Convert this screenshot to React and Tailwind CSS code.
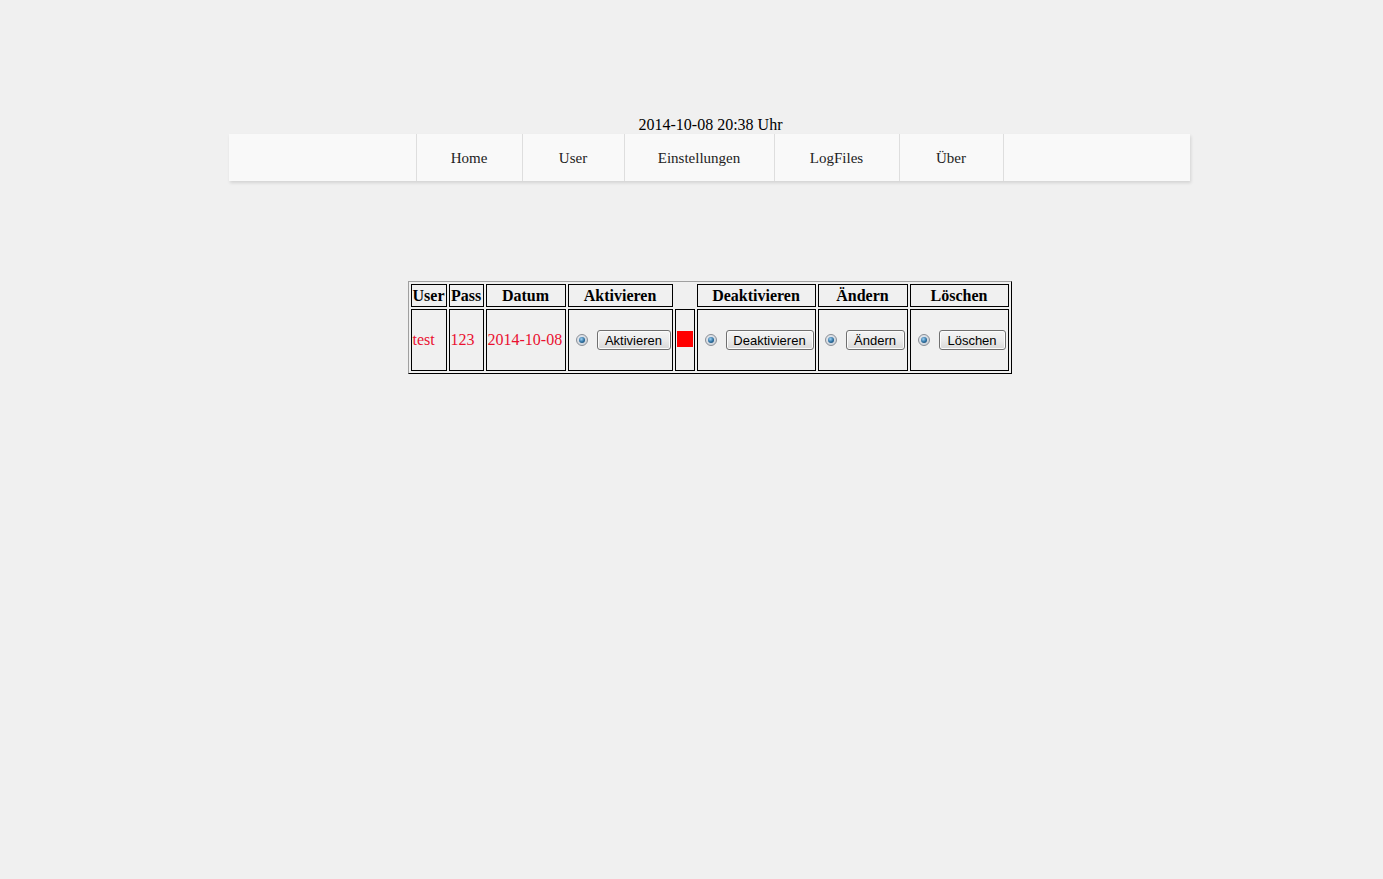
import React from 'react';

const navItems = [
  { label: 'Home', w: 'w-[106px]' },
  { label: 'User', w: 'w-[102px]' },
  { label: 'Einstellungen', w: 'w-[150px]' },
  { label: 'LogFiles', w: 'w-[125px]' },
  { label: 'Über', w: 'w-[104px]' },
];

function Radio() {
  return (
    <span className="inline-flex items-center justify-center w-[12px] h-[12px] rounded-full border border-[#8a8f96] bg-gradient-to-br from-[#e4e8ee] to-[#c9d0d8] shrink-0">
      <span className="w-[6px] h-[6px] rounded-full bg-[radial-gradient(circle_at_40%_35%,#9fd3f5_0%,#2c6fa0_55%,#173d5e_100%)]" />
    </span>
  );
}

function Btn({ children, w }) {
  return (
    <button
      type="button"
      className={`${w} h-[20px] rounded-[3px] border border-[#707070] bg-gradient-to-b from-[#f4f4f4] via-[#ebebeb] to-[#d8d8d8] text-[13px] leading-none text-black font-['Liberation_Sans',Arial,sans-serif] shadow-[inset_0_0_0_1px_#fbfbfb]`}
    >
      {children}
    </button>
  );
}

function ActionCell({ label, w, pl }) {
  return (
    <td className="border border-black p-0">
      <div className={`flex items-center ${pl} gap-[9px]`}>
        <Radio />
        <Btn w={w}>{label}</Btn>
      </div>
    </td>
  );
}

export default function App() {
  const th = 'border border-black p-0 h-[21px] leading-[21px] font-bold text-[16px] text-center';
  return (
    <div className="min-h-screen bg-[#f0f0f0] font-['Liberation_Serif','Times_New_Roman',serif] text-black">
      <div className="w-[961px] ml-[229px] pt-[116px]">
        <div className="text-center text-[16px] leading-[18px] ml-[2px]">2014-10-08 20:38 Uhr</div>

        {/* Navigation */}
        <nav className="h-[47px] bg-[#f9f9f9] shadow-[1px_2px_3px_rgba(0,0,0,0.12)] flex justify-center">
          <ul className="flex border-r border-[#dedede]">
            {navItems.map((item) => (
              <li
                key={item.label}
                className={`${item.w} border-l border-[#dedede] flex items-center justify-center pt-[2px] text-[15px] text-[#222]`}
              >
                {item.label}
              </li>
            ))}
          </ul>
        </nav>

        {/* User table */}
        <table className="mt-[100px] mx-auto table-fixed border-separate border-spacing-[2px] border border-t-[#a0a0a0] border-l-[#a0a0a0] border-r-black border-b-black w-[604px]">
          <colgroup>
            <col className="w-[36px]" />
            <col className="w-[35px]" />
            <col className="w-[80px]" />
            <col className="w-[105px]" />
            <col className="w-[20px]" />
            <col className="w-[119px]" />
            <col className="w-[90px]" />
            <col className="w-[99px]" />
          </colgroup>
          <thead>
            <tr>
              <th className={th}>User</th>
              <th className={th}>Pass</th>
              <th className={th}>Datum</th>
              <th className={th}>Aktivieren</th>
              <th className="p-0 border-0" />
              <th className={th}>Deaktivieren</th>
              <th className={th}>Ändern</th>
              <th className={th}>Löschen</th>
            </tr>
          </thead>
          <tbody>
            <tr className="h-[62px] text-[16px] text-[#ea1030]">
              <td className="border border-black p-0 pl-[1px]">test</td>
              <td className="border border-black p-0 pl-[1px]">123</td>
              <td className="border border-black p-0 pl-[1px]">2014-10-08</td>
              <ActionCell label="Aktivieren" w="w-[74px]" pl="pl-[7px]" />
              <td className="border border-black p-0">
                <div className="flex justify-center">
                  <span className="w-[16px] h-[16px] bg-[#ff0000] -mt-[3px]" />
                </div>
              </td>
              <ActionCell label="Deaktivieren" w="w-[88px]" pl="pl-[7px]" />
              <ActionCell label="Ändern" w="w-[59px]" pl="pl-[6px]" />
              <ActionCell label="Löschen" w="w-[67px]" pl="pl-[7px]" />
            </tr>
          </tbody>
        </table>
      </div>
    </div>
  );
}
